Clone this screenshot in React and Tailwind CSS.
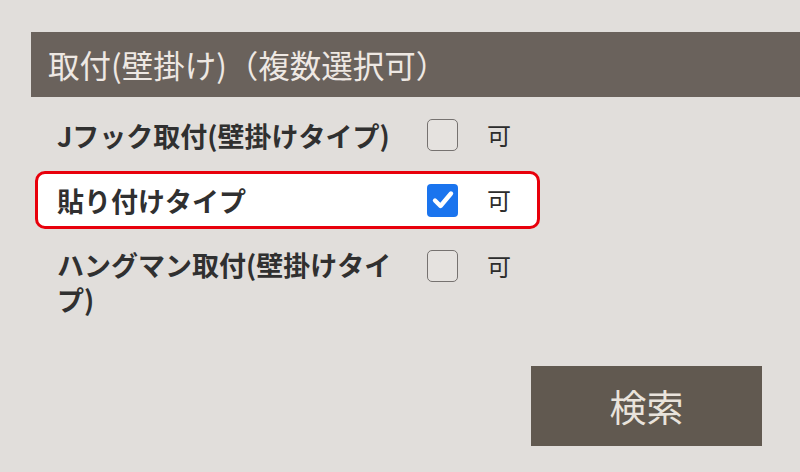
const rows = [
  { label: 'Jフック取付(壁掛けタイプ)', checked: false },
  { label: '貼り付けタイプ', checked: true, highlight: true },
  { label: 'ハングマン取付(壁掛けタイプ)', checked: false, wrap: true },
]

function Checkbox({ checked }) {
  if (checked) {
    return (
      <div className="w-[31px] h-[33px] shrink-0 rounded-[4px] bg-[#1a74ee] flex items-center justify-center">
        <svg width="24" height="24" viewBox="0 0 24 24" fill="none">
          <path d="M4 12.5 L9.5 18 L20 5.5" stroke="white" strokeWidth="4.4" strokeLinecap="round" strokeLinejoin="round" />
        </svg>
      </div>
    )
  }
  return (
    <div className="w-[31px] h-[32px] shrink-0 rounded-[5px] border border-[#767270] bg-[#e5e2df]" />
  )
}

export default function App() {
  return (
    <div
      className="w-[800px] h-[472px] overflow-hidden bg-[#e1dedb] pt-[32px] pl-[31px]"
      style={{ fontFamily: '"Noto Sans CJK JP", "Noto Sans", sans-serif' }}
    >
      {/* header */}
      <div className="h-[65px] bg-[#6a625c] pl-[17px] flex items-center text-[31.5px] text-[#eee8e3] leading-none whitespace-nowrap">
        取付(壁掛け)（複数選択可）
      </div>

      {/* options */}
      <div className="mt-[5px] flex flex-col">
        {rows.map(r => (
          <div
            key={r.label}
            className={
              r.highlight
                ? 'ml-[4px] w-[505px] h-[58px] mt-[3px] border-[3px] border-[#e8000b] rounded-[10px] bg-white pl-[19px] flex items-center'
                : r.wrap
                ? 'ml-[4px] w-[505px] border-[3px] border-transparent pl-[19px] pt-[15px] flex items-start'
                : 'ml-[4px] w-[505px] h-[66px] border-[3px] border-transparent pl-[19px] flex items-center'
            }
          >
            <div className="w-[345px] shrink-0 text-[27px] font-bold leading-[35px] text-[#303030]">
              {r.label}
            </div>
            <div className={r.wrap ? 'ml-[25px] mt-[3px] flex items-center' : 'ml-[25px] flex items-center'}>
              <Checkbox checked={r.checked} />
              <span className="ml-[29px] text-[24px] leading-[32px] text-[#2c2c2c]">可</span>
            </div>
          </div>
        ))}
      </div>

      {/* search */}
      <div className="mt-[46px] flex justify-end pr-[38px]">
        <button className="w-[231px] h-[80px] bg-[#615950] text-[37px] leading-none text-[#e9e3dc]">
          検索
        </button>
      </div>
    </div>
  )
}
